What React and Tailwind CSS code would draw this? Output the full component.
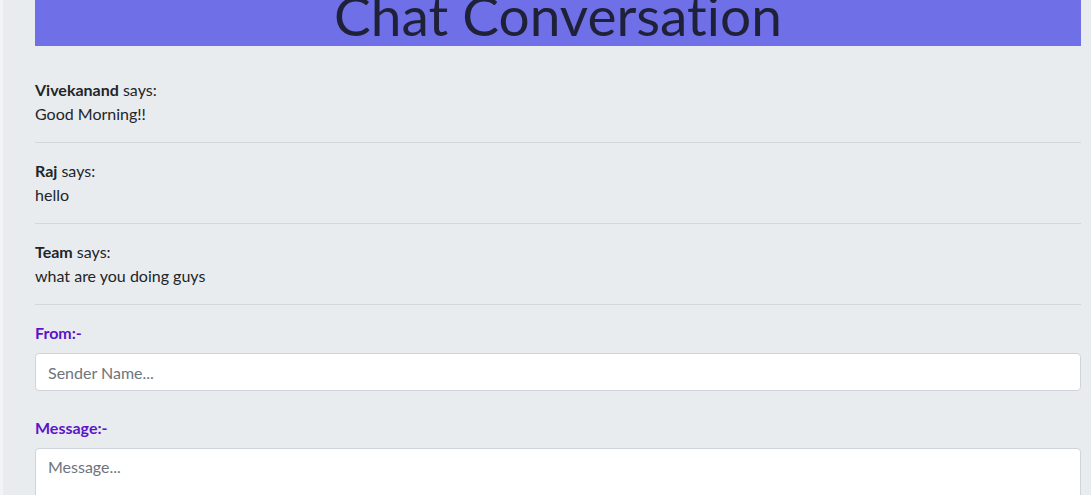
import React from "react";

// Messages shown in the conversation list
const messages = [
  { from: "Vivekanand", text: "Good Morning!!" },
  { from: "Raj", text: "hello" },
  { from: "Team", text: "what are you doing guys" },
];

const MessageRow = ({ from, text }) => (
  <div className="py-4 border-b border-[#d3d6da] leading-6">
    <p>
      <span className="font-bold">{from}</span> says:
    </p>
    <p>{text}</p>
  </div>
);

const App = () => {
  return (
    <div
      className="min-h-screen bg-[#e9ecef] text-[#212529] text-base border-l-[3px] border-[#f1f3f5] [font-variant-ligatures:none]"
      style={{ fontFamily: "Lato, 'Open Sans', sans-serif" }}
    >
      <div className="ml-[32px] mr-[10px]">
        {/* Title bar */}
        <div className="h-[46px] bg-[#6f70e8] overflow-hidden flex justify-center">
          <h1 className="text-[55px] leading-[56px] font-normal mt-[-13px] text-[#1f2138]">
            Chat Conversation
          </h1>
        </div>

        {/* Conversation */}
        <div className="pt-4">
          {messages.map((m) => (
            <MessageRow key={m.from} from={m.from} text={m.text} />
          ))}
        </div>

        {/* Send form */}
        <form className="pt-4">
          <div className="mb-[25px]">
            <label className="block mb-2 font-bold text-[#5b14c9] leading-6">From:-</label>
            <input
              type="text"
              placeholder="Sender Name..."
              className="w-full h-[38px] px-3 bg-white border border-[#ced4da] rounded text-base placeholder:text-[#6c757d] outline-none"
            />
          </div>
          <div>
            <label className="block mb-2 font-bold text-[#5b14c9] leading-6">Message:-</label>
            <textarea
              rows={3}
              placeholder="Message..."
              className="w-full px-3 py-[6px] bg-white border border-[#ced4da] rounded text-base placeholder:text-[#6c757d] outline-none resize-none"
            />
          </div>
        </form>
      </div>
    </div>
  );
};

export default App;
